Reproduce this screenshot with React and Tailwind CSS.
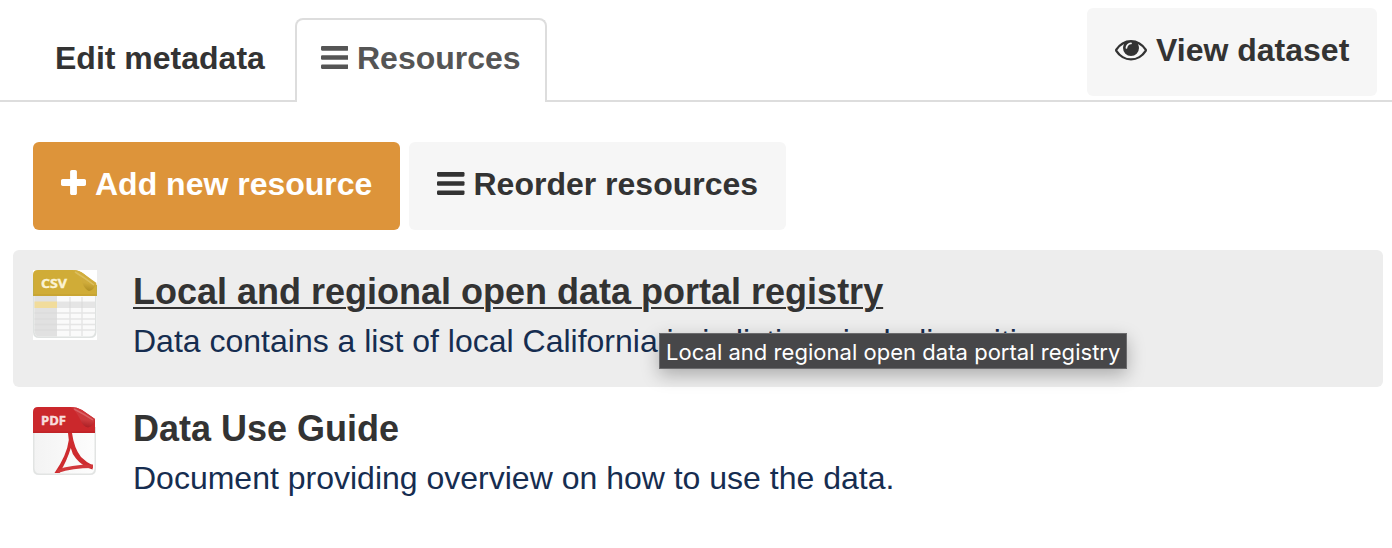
function BarsIcon({ className }) {
  return (
    <svg viewBox="128 256 1536 1280" className={className} fill="currentColor" aria-hidden="true">
      <rect x="128" y="256" width="1536" height="256" rx="64" />
      <rect x="128" y="768" width="1536" height="256" rx="64" />
      <rect x="128" y="1280" width="1536" height="256" rx="64" />
    </svg>
  );
}

function PlusIcon({ className }) {
  return (
    <svg viewBox="192 128 1408 1408" className={className} fill="currentColor" aria-hidden="true">
      <path d="M1600 736v192q0 40-28 68t-68 28h-416v416q0 40-28 68t-68 28h-192q-40 0-68-28t-28-68v-416h-416q-40 0-68-28t-28-68v-192q0-40 28-68t68-28h416v-416q0-40 28-68t68-28h192q40 0 68 28t28 68v416h416q40 0 68 28t28 68z" />
    </svg>
  );
}

function EyeIcon({ className }) {
  return (
    <svg viewBox="0 384 1792 1152" className={className} fill="currentColor" aria-hidden="true">
      <path d="M1664 960q-152-236-381-353 61 104 61 225 0 185-131.5 316.5t-316.5 131.5-316.5-131.5-131.5-316.5q0-121 61-225-229 117-381 353 133 205 333.5 326.5t434.5 121.5 434.5-121.5 333.5-326.5zm-720-384q0-20-14-34t-34-14q-125 0-214.5 89.5t-89.5 214.5q0 20 14 34t34 14 34-14 14-34q0-86 61-147t147-61q20 0 34-14t14-34zm848 384q0 34-20 69-140 230-376.5 368.5t-499.5 138.5-499.5-139-376.5-368q-20-35-20-69t20-69q140-229 376.5-368t499.5-139 499.5 139 376.5 368q20 35 20 69z" />
    </svg>
  );
}

function CsvIcon() {
  return (
    <svg viewBox="0 0 64 70" className="h-[70px] w-16 shrink-0" aria-hidden="true">
      <defs>
        <linearGradient id="csvFold" x1="0.6" y1="0" x2="0.4" y2="1">
          <stop offset="0" stopColor="#d3b040" />
          <stop offset="0.6" stopColor="#cfab3a" />
          <stop offset="1" stopColor="#ab8a20" />
        </linearGradient>
      </defs>
      <rect width="64" height="70" fill="#fff" />
      <path d="M0 22H63.5V62Q63.5 68 57 68H6Q0 68 0 62Z" fill="#dfe2e1" />
      <path d="M1.5 26H62V61Q62 66.5 56 66.5H7Q1.5 66.5 1.5 61Z" fill="#fafafa" />
      <path d="M1.5 26H24V66.5H7Q1.5 66.5 1.5 61Z" fill="#e1e1e1" />
      <rect x="24" y="31.5" width="38" height="6.5" fill="#e5e5e5" />
      <rect x="1.5" y="31.5" width="22.5" height="6.5" fill="#f1dc9c" />
      <path d="M1.5 43H62M1.5 49H62M1.5 54.5H62M1.5 60H62M37 27V66M49 27V66" stroke="#dadada" strokeWidth="1.4" opacity="0.65" />
      <path d="M0 26V5Q0 0 5 0H40Q46 0 51 4L64 15V26Z" fill="#d0ac37" />
      <path d="M0 24H64V26H0Z" fill="#c9a533" />
      <path d="M40 0Q45 4 49 12Q52 20 56 21Q61 20 63.5 13L51 4Q46 0 40 0Z" fill="url(#csvFold)" />
      <path d="M42 2Q52 8 61 15" stroke="#dfc46b" strokeWidth="1.5" fill="none" opacity="0.7" />
      <path d="M0.3 10V26M63.7 16V26" stroke="#b3ad4c" strokeWidth="0.7" />
      <text x="8" y="17.8" fontSize="12" fontWeight="700" fontFamily="Open Sans, sans-serif" fill="#fbf3d3" stroke="#fbf3d3" strokeWidth="0.4" textLength="26" lengthAdjust="spacingAndGlyphs">CSV</text>
    </svg>
  );
}

function PdfIcon() {
  return (
    <svg viewBox="0 0 64 70" className="h-[70px] w-16 shrink-0" aria-hidden="true">
      <defs>
        <linearGradient id="pdfFold" x1="0.6" y1="0" x2="0.4" y2="1">
          <stop offset="0" stopColor="#cf3338" />
          <stop offset="0.6" stopColor="#cc3a3d" />
          <stop offset="1" stopColor="#a51b20" />
        </linearGradient>
        <linearGradient id="pdfPage" x1="0" y1="0" x2="1" y2="0">
          <stop offset="0" stopColor="#f3f3f3" />
          <stop offset="1" stopColor="#fdfdfd" />
        </linearGradient>
      </defs>
      <path d="M0 20H63V62Q63 68 57 68H6Q0 68 0 62Z" fill="#e2e4e3" />
      <path d="M1.5 25H61.5V61Q61.5 66.5 56 66.5H7Q1.5 66.5 1.5 61Z" fill="url(#pdfPage)" />
      <path d="M0 26V5Q0 0 5 0H38Q44 0 49 3L62 12V26Z" fill="#cb282c" />
      <path d="M0 24.5H62V26H0Z" fill="#c02327" />
      <path d="M38 0Q43 4 47 12Q50 20 55 20.5Q60 20 62 12L49 3Q44 0 38 0Z" fill="url(#pdfFold)" />
      <path d="M41 2Q51 7 60 13" stroke="#df7476" strokeWidth="1.5" fill="none" opacity="0.7" />
      <path d="M35 26H39Q41 41 48 50Q53 55 60 58.5L59.5 62.5Q49 59 43 51.5Q39 47 37.8 41Q34 54 26.5 66H21.5Q34 48 35.8 33Z" fill="#ce2b2f" />
      <path d="M24 63Q37 57.5 60 57.5V61Q39 61 25 66Z" fill="#d1383b" />
      <text x="8" y="17.8" fontSize="12" fontWeight="700" fontFamily="Open Sans, sans-serif" fill="#f8dede" stroke="#f8dede" strokeWidth="0.4" textLength="25" lengthAdjust="spacingAndGlyphs">PDF</text>
    </svg>
  );
}

function Resource({ icon, title, description, active }) {
  return (
    <li className={`flex h-[137px] gap-9 rounded-md pl-5 pt-5 ${active ? "bg-[#ededed]" : ""}`}>
      {icon}
      <div className="whitespace-nowrap">
        <a
          className={`block text-[36px] leading-[44px] font-bold text-[#333] ${active ? "underline decoration-2 underline-offset-[3px]" : ""}`}
        >
          {title}
        </a>
        <p className="mt-[7px] text-[32px] leading-10 text-[#162d50]">{description}</p>
      </div>
    </li>
  );
}

export default function App() {
  return (
    <div className="relative h-[548px] w-[1392px] overflow-hidden bg-white font-['Liberation_Sans',Arial,sans-serif] text-[32px] leading-10 text-[#333]">
      <header className="flex h-[102px] items-start whitespace-nowrap font-bold">
        <div className="h-[102px] w-[295px] border-b-2 border-[#ddd] pl-[55px] pt-[38px]">Edit metadata</div>
        <div className="mt-[18px] flex h-[84px] w-[252px] gap-[9px] rounded-t-lg border-2 border-b-0 border-[#ddd] pl-[23.5px] pt-[18px] text-[#555]">
          <BarsIcon className="mt-[8px] h-[23px] w-[27.5px]" />
          <span>Resources</span>
        </div>
        <div className="flex h-[102px] flex-1 justify-end border-b-2 border-[#ddd] pr-[15px] pt-2">
          <button className="flex h-[88px] w-[290px] gap-[9px] rounded-md bg-[#f6f6f6] pl-7 pt-[22px]">
            <EyeIcon className="mt-[10px] h-[20.6px] w-8" />
            <span>View dataset</span>
          </button>
        </div>
      </header>

      <div className="flex gap-[9px] pl-[33px] pt-10 font-bold whitespace-nowrap">
        <button className="flex h-[88px] w-[367px] gap-[9px] rounded-md bg-[#dd943a] pl-7 pt-[22px] text-white">
          <PlusIcon className="mt-[6px] h-[25px] w-[25px]" />
          <span>Add new resource</span>
        </button>
        <button className="flex h-[88px] w-[377px] gap-[9px] rounded-md bg-[#f6f6f6] pl-7 pt-[22px]">
          <BarsIcon className="mt-[8px] h-[23px] w-[27.5px]" />
          <span>Reorder resources</span>
        </button>
      </div>

      <ul className="ml-[13px] mr-[9px] mt-5">
        <Resource
          active
          icon={<CsvIcon />}
          title="Local and regional open data portal registry"
          description="Data contains a list of local California jurisdictions including cities"
        />
        <Resource
          icon={<PdfIcon />}
          title="Data Use Guide"
          description="Document providing overview on how to use the data."
        />
      </ul>

      <div
        role="tooltip"
        className="absolute left-[659px] top-[333px] flex h-9 w-[468px] items-center border border-[#6b6b6d] bg-[#474749] pl-[6px] pt-px font-[Inter,Roboto,sans-serif] text-[22px] leading-none tracking-[0.03px] whitespace-nowrap text-white shadow-[0_6px_18px_rgba(0,0,0,0.28)]"
      >
        Local and regional open data portal registry
      </div>
    </div>
  );
}
